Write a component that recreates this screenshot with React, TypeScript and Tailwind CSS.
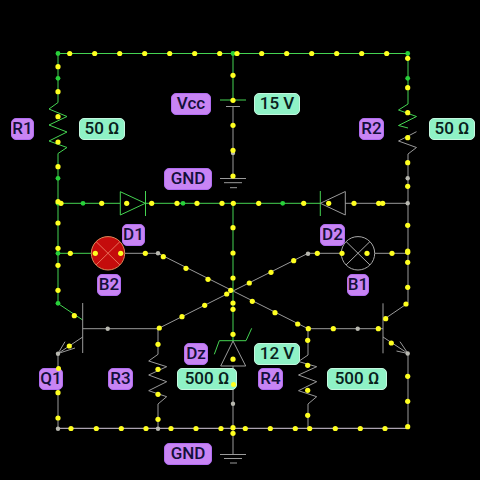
const G = "#45d452";
const A = "#9a9a9a";

const wires: [string, string][] = [
  [G, "M58 53.5H408"],
  [G, "M58 53.5V102.5L49 109L67 116.5L49 125L67 132L49 141L67 147.5L58 153.5V303.5L82.7 320"],
  [G, "M233 53.5V100M220 100H246"],
  [A, "M226 106.5H240M233 106.5V177M220 178.5H246M224 182.7H242M230 187.7H237"],
  [G, "M58 203.3H120M145.4 203.3H320"],
  [G, "M120.3 191.7V215L145.3 203.3ZM145.5 191V216"],
  [G, "M320.3 191V216"],
  [A, "M320.3 203.3L345.3 191.5V215ZM345 203.3H408"],
  [G, "M408 53.5V104L398.5 110L416.5 116.5L398.5 125.5L408 128"],
  [A, "M416.5 131.7L398.5 141L416.5 147.5L408 154V303L383 320M383 303.3V353.3M383 328.7H308M383 337L408 353.5V428.3M408 353.5L400 341.7M408 353.5L396.5 351"],
  ["#d6cbdc", "M408 428.3H58"],
  [A, "M58 428.3V353.5L82.7 337M82.7 303V353M82.7 328.7H158M58 353.5L65 341.7M58 353.5L75 348"],
  [A, "M158 328.5V354.3L148.7 361L166.7 366.7L148.7 375L166.7 381.7L148.7 390.7L166.7 396.7L158 404V428.3"],
  [A, "M308 328.5V355L298.5 361.5L316.7 366.7L298.5 375L316.7 381.7L298.5 390.7L316.7 396.7L308 404V428.3"],
  [A, "M125 253.3H158L308 328.7M158 328.7L308 253.3H342M375 253.3H408"],
  [G, "M58 253.3H91"],
  [G, "M233 203.3V341M214.3 354.3L219.3 340.7H246L251.7 328.3"],
  [A, "M233 341L220.7 366H245.7ZM233 366V455M220 454.5H246M224 458.5H242M230 463H237"],
];

const yellow: [number, number][] = [
  [69.7,53.5],[94.7,53.5],[119.7,53.5],[144.7,53.5],[169.7,53.5],[194.7,53.5],[219.7,53.5],[237,53.5],[261.7,53.5],[286.7,53.5],[311.7,53.5],[336.7,53.5],[361.7,53.5],[386.7,53.5],
  [58,66.7],[58,91.7],[58,116.7],[58,142],[58,166.7],[58,201.7],[61,203.3],[58,223],[58,248.3],
  [101.7,203.3],[126.7,203.3],[151.7,203.3],[177,203.3],[197,203.3],[222,203.3],[233.3,203.3],[258.7,203.3],[303.7,203.3],[328.7,203.3],[354,203.3],[378.7,203.3],[382.7,203.3],
  [233,75.3],[233,100.3],[233,125.3],[233,150.3],[233,176],[233,227.7],[233,253],[233,278],[233,303],[233,309.3],[233,334.3],[233,359.2],[233,427.7],[233,433.3],
  [70.3,253.3],[95.3,253.3],[120.7,253.3],[145.3,253.3],[163.3,256.7],[186,268.3],[208,279.3],[230.7,290.3],[226.7,294],[204.7,305.3],[182,316.7],[159.3,328],
  [58,265.3],[58,290.3],[74.3,315.7],[69.3,346],[58,392.7],[58,418],
  [158,344.3],[158,369.3],[158,394.3],[158,419.3],
  [71,428.5],[96.3,428.5],[121.3,428.5],[146,428.5],[171,428.5],[196,428.5],[221,428.5],[245.3,428.5],[270.3,428.5],[295.3,428.5],[309.7,428.5],[335.3,428.5],[360.3,428.5],[385,428.5],[407.7,426.7],
  [407.7,252.3],[407.7,262.3],[407.7,287.3],[406,304],[385.7,318.7],[391.3,343],[407.7,376.3],[407.7,401.3],
  [378.3,328.7],[333.3,328.7],[308.3,328.7],[307.7,340.3],[307.7,365.3],[307.7,390.3],[307.7,415.3],
  [297.7,324],[275,312.7],[252.3,301.3],[249.3,283],[271,272.3],[293.7,260.7],[317.3,253.3],[342,253.3],[367,253.3],[392,253.3],
  [407.7,58.3],[407.7,87.7],[407.7,112.7],[407.7,137.7],[407.7,162.7],[407.7,186.3],[407.7,225.3],[407.7,251],
];
const greenDots: [number, number][] = [[58,53.5],[233,53.5],[407.7,53.5],[58,78.3],[58,178.3],[58,203.3],[83,203.3],[183,203.3],[282.7,203.3],[407.7,78.3],[58,253.3],[58,303.3]];
const greyDots: [number, number][] = [[233,153],[407.7,178.3],[407.7,203.3],[158,253.3],[58,353.7],[58,428.7],[107.7,328.7],[158,428.7],[233,403.7],[308,253.7],[357.7,328.7],[407.7,353.5]];

const purple = "absolute flex h-[22px] items-center justify-center rounded-[5px] border border-[#b06cf0] bg-[#c884f4] text-[17px] font-medium text-[#14103a] [font-family:Roboto,sans-serif]";
const teal = "absolute flex h-[22px] items-center justify-center rounded-[5px] border border-[#c4f7df] bg-[#8ff2c6] text-[17px] font-medium text-[#08201c] [font-family:Roboto,sans-serif]";
const dot = "absolute h-[5px] w-[5px] rounded-full bg-[#ffff20]";

export default function App() {
  return (
    <div className="relative h-[480px] w-[480px] overflow-hidden bg-black">
      <svg className="absolute inset-0" width="480" height="480" viewBox="0 0 480 480" fill="none" strokeWidth="1">
        {wires.map(([c, d], i) => (
          <path key={i} d={d} stroke={c} />
        ))}
        <circle cx="108" cy="253.3" r="16.7" fill="#c40c0c" stroke="#d98a5a" />
        <path d="M96 241.5L120 265M120 241.5L96 265" stroke="#e8705a" />
        <circle cx="358" cy="253.3" r="16.7" stroke="#a8a8a8" />
        <path d="M346 241.5L370 265M370 241.5L346 265" stroke="#a8a8a8" />
        {greenDots.map(([x, y], i) => (
          <circle key={i} cx={x} cy={y} r="2.4" fill="#28d03a" />
        ))}
        {greyDots.map(([x, y], i) => (
          <circle key={i} cx={x} cy={y} r="2.2" fill="#b8b8b0" />
        ))}
        {yellow.map(([x, y], i) => (
          <circle key={i} cx={x} cy={y} r="2.6" fill="#ffff20" />
        ))}
      </svg>

      <div className={`${purple} left-[11px] top-[118px] w-[23px]`}>R1</div>
      <div className={`${teal} left-[79px] top-[118px] w-[46px]`}>50 Ω</div>
      <div className={`${purple} left-[171px] top-[93px] w-[40px]`}>Vcc</div>
      <div className={`${teal} left-[254px] top-[93px] w-[46px]`}>15 V</div>
      <div className={`${purple} left-[164px] top-[168px] w-[48px]`}>GND</div>
      <div className={`${purple} left-[359px] top-[118px] w-[25px]`}>R2</div>
      <div className={`${teal} left-[429px] top-[118px] w-[46px]`}>50 Ω</div>
      <div className={`${purple} left-[122px] top-[224px] w-[23px]`}>D1</div>
      <div className={`${purple} left-[320px] top-[224px] w-[25px]`}>D2</div>
      <div className={`${purple} left-[97px] top-[274px] w-[24px]`}>B2</div>
      <div className={`${purple} left-[347px] top-[274px] w-[22px]`}>B1</div>
      <div className={`${purple} left-[39px] top-[368px] w-[24px]`}>Q1</div>
      <div className={`${purple} left-[108px] top-[368px] w-[25px]`}>R3</div>
      <div className={`${purple} left-[184px] top-[343px] w-[24px]`}>Dz</div>
      <div className={`${teal} left-[177px] top-[368px] w-[60px]`}>500 Ω</div>
      <div className={`${teal} left-[254px] top-[343px] w-[46px]`}>12 V</div>
      <div className={`${purple} left-[258px] top-[368px] w-[25px]`}>R4</div>
      <div className={`${teal} left-[327px] top-[368px] w-[60px]`}>500 Ω</div>
      <div className={`${purple} left-[164px] top-[443px] w-[48px]`}>GND</div>
      <div className={`${dot} left-[231px] top-[382px]`} />
      <div className={`${dot} left-[56px] top-[366px]`} />
    </div>
  );
}
